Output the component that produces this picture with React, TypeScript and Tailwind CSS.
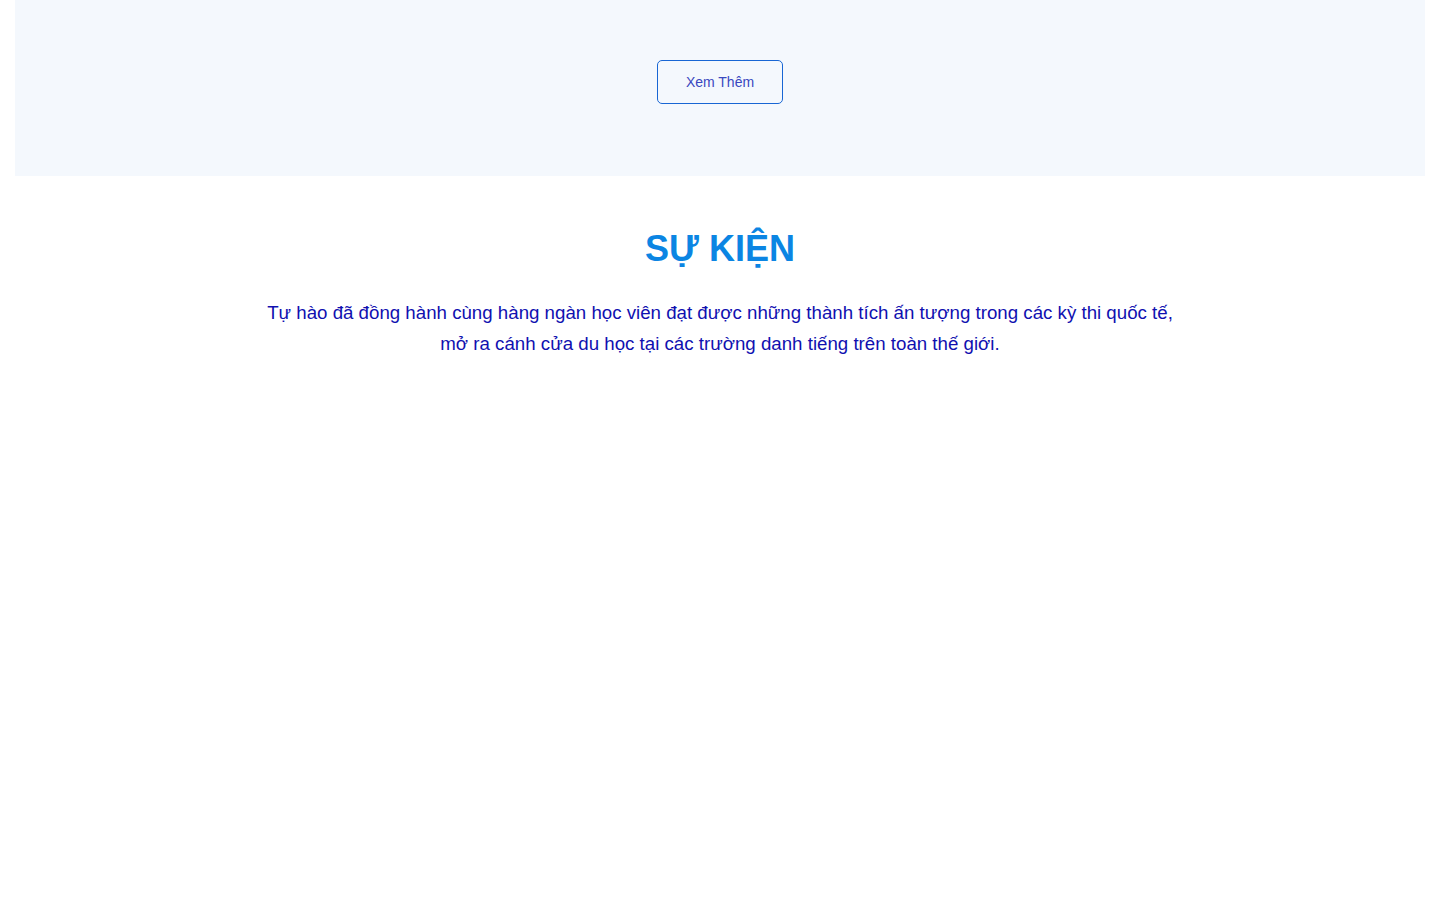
import React from 'react';

const App = () => {
  return (
    <div className="min-h-[900px] bg-white" style={{ fontFamily: '"Liberation Sans", Arial, sans-serif' }}>
      {/* top block */}
      <section className="mx-[15px] h-[176px] bg-[#f4f8fd] pt-[60px] flex justify-center">
        <button className="w-[126px] h-[44px] border border-[#1866d4] rounded-[5px] text-[14px] text-[#3a48c0] bg-transparent">
          Xem Thêm
        </button>
      </section>

      {/* events */}
      <section className="pt-[51px] flex flex-col items-center">
        <h2 className="text-[36px] leading-[44px] font-bold text-[#0b85e3]">SỰ KIỆN</h2>
        <p className="mt-[26px] max-w-[980px] text-center text-[18.7px] leading-[31px] text-[#1010b0]">
          Tự hào đã đồng hành cùng hàng ngàn học viên đạt được những thành tích ấn tượng trong các kỳ thi quốc tế,
          <br />
          mở ra cánh cửa du học tại các trường danh tiếng trên toàn thế giới.
        </p>
      </section>
    </div>
  );
};

export default App;
